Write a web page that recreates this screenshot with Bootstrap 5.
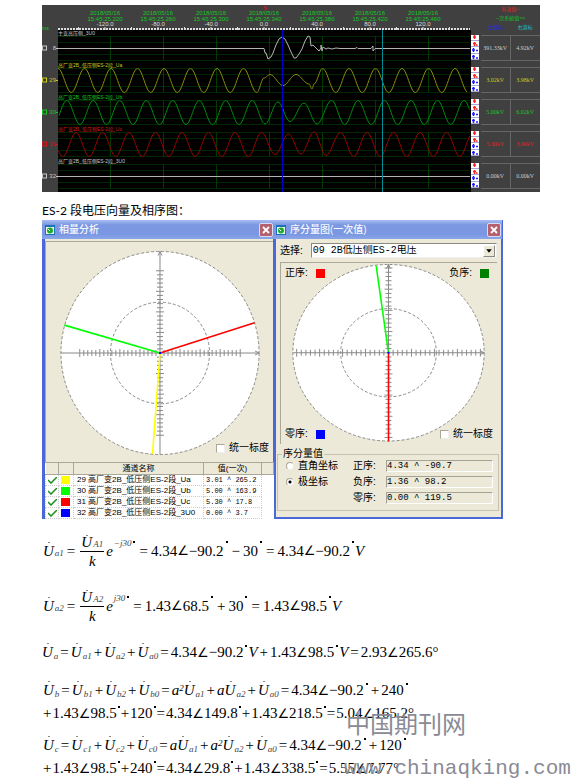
<!DOCTYPE html>
<html lang="zh-CN">
<head>
<meta charset="utf-8">
<meta name="viewport" content="width=device-width, initial-scale=1">
<title>ES-2 段电压向量及相序图</title>
<link href="https://cdn.jsdelivr.net/npm/bootstrap@5.3.0/dist/css/bootstrap.min.css" rel="stylesheet">
<style>
  body { background: #fff; color: #000; font-family: "Liberation Sans", "Noto Sans CJK SC", sans-serif; }
  .sheet { padding: 5px 34px 0 42px; }
  svg { display: block; }

  /* waveform recorder */
  .recorder { display: grid; grid-template-columns: 1fr 69px; background: #404040; overflow: hidden; }
  .recorder text { font-size: 6px; }
  .recorder .chan { font-size: 5px; }
  .readout { display: grid; grid-template-columns: 8px 59px; column-gap: 2px; grid-template-rows: 27px repeat(5, 32px); }
  .zoomers { background: #fff; margin: 3px 0 4px; display: grid; grid-template-rows: repeat(4, 1fr); row-gap: 1px; }
  .zoomers button { border: 0; padding: 0 1px; background: #fff; line-height: 0; color: #f22; border-bottom: 1px solid #aac; overflow: hidden; }
  .zoomers button:nth-child(n+3) { color: #22f; }
  .pair { display: grid; grid-template-columns: 1fr 1fr; margin: 3px 0; border: solid #666; border-width: 1px 0; font: 6px/24px "Liberation Serif", serif; text-align: center; color: #ccc; }
  .pair > :first-child { border-right: 1px solid #666; }
  .head { font-size: 5px; line-height: 9px; text-align: center; }
  .tone-y { color: #c8c820; } .tone-g { color: #12c822; } .tone-r { color: #e02020; }
  .tone-b { color: #2020ff; } .tone-c { color: #10c8c8; }

  .caption { font: 12px/18px "Lato", "Noto Sans CJK SC", sans-serif; margin: 10px 0 0; }

  /* dialogs */
  .dialogs { display: grid; grid-template-columns: 232fr 229fr; max-width: 461px; font-size: 10px; line-height: 12px; align-items: start; }
  .dlg { background: #ece9d8; border: solid #4a68d8; border-width: 0 1px 0 3px; min-width: 0; }
  .dlg-seq { border-width: 0 2px 2px; }
  .dlg-title { height: 19px; margin: 0 -1px 0 -3px; padding: 0 1px 0 3px; background: linear-gradient(#a9bdf2, #7c98e2 25%, #7b97e1 75%, #89a6ea); color: #f4f7ff; gap: 4px; }
  .dlg-title h2 { font-size: 10px; line-height: 19px; margin: 0; font-weight: 500; flex: 1; }
  .dlg-title button { width: 14px; height: 14px; padding: 0; border: 1px solid #d8dcf4; border-radius: 2px; background: #b5606c; line-height: 0; }
  .stack { display: grid; border: solid #aca899; border-width: 1px 0 0 1px; }
  .stack > * { grid-area: 1 / 1; }
  .stack > .plot { width: 100%; height: auto; }
  .slim { margin-top: 2px; }
  .source { margin: 4px 4px 0; }
  .corner-tl { place-self: start; } .corner-tr { place-self: start end; }
  .corner-bl { place-self: end start; } .corner-br { place-self: end; }
  .swatch { width: 9px; height: 9px; }
  .chan-list .swatch { height: 8px; }
  .bg-y { background: #ff0; } .bg-g { background: #0f0; } .bg-r { background: #f00; } .bg-b { background: #00f; } .bg-dg { background: #008000; }
  input[type=checkbox], input[type=radio] { appearance: none; margin: 0; width: 9px; height: 9px; background: #fff; border: 1px solid #aaa698; border-right-color: #eee; border-bottom-color: #eee; }
  input[type=radio] { border-radius: 50%; width: 8px; height: 8px; }
  input[type=radio]:checked { background: radial-gradient(#000 0 1px, #fff 2px); }
  .chan-list { width: 100%; table-layout: fixed; border-collapse: collapse; background: #fff; font-size: 8px; line-height: 10px; }
  .chan-list th { height: 12px; padding: 0; font-weight: 400; text-align: center; background: #ece9d8; border: 1px solid #aca899; border-left-color: #fff; }
  .chan-list td { height: 11px; padding: 0 3px; border: 1px dotted #ccc; border-top: 0; white-space: nowrap; }
  .chan-list .tight { padding: 0 2px; }
  .chan-list .val { font: 7px/10px "Liberation Mono", monospace; padding: 0 2px; }
  .chan-list td:last-child { border-color: transparent; }
  .picker { font: 10px/12px "Liberation Mono", "Noto Sans CJK SC", monospace; height: 15px; border: 1px solid #8c8a80; border-right-color: #eee; border-bottom-color: #eee; padding: 0 0 0 1px; background: #fff; appearance: none; border-radius: 0; color: #000; width: 100%; }
  .drop { width: 12px; height: 12px; background: #ece9d8; border: 1px solid #fff; border-right-color: #8c8a80; border-bottom-color: #8c8a80; justify-self: end; margin: 2px 2px 0 0; pointer-events: none; }
  .group { border: 1px solid #c5c2b2; margin: 4px 2px 6px 1px; padding: 0 5px 6px 8px; }
  .group legend { float: none; width: auto; font-size: 10px; line-height: 12px; margin: 0 0 0 -4px; padding: 0 1px; }
  .fields { display: grid; grid-template-columns: 67px 33px 1fr; row-gap: 4px; align-items: center; }
  .fields input[type=text] { width: 100%; min-width: 0; height: 12px; padding: 0; font: 9px/10px "Liberation Mono", monospace; background: #ece9d8; border: 1px solid #a5a294; border-right-color: #fff; border-bottom-color: #fff; }

  /* equations */
  .eq { display: flex; align-items: baseline; white-space: nowrap; font: 15px/20px "Liberation Serif", "DejaVu Sans", serif; height: 22px; margin-left: 1px; }
  .eq sub, .eq sup { font-size: 9px; line-height: 1; }
  .eq sub { bottom: -2px; color: #444; padding-left: 1px; }
  .eq .flush sub { bottom: 0; }
  .eq .ph { position: relative; }
  .eq .ph::before { content: ""; position: absolute; left: 5px; top: 1px; width: 2px; height: 1px; background: #888; }
  .op { padding: 0 2px; }
  .ang { font-size: 13px; font-family: "DejaVu Sans", sans-serif; }
  .deg { width: 2px; height: 2px; background: #000; margin: 3px 1px 0 2px; align-self: flex-start; }
  .frac { display: inline-flex; flex-direction: column; align-items: center; line-height: 18px; margin: 0 2px; }
  .frac > :first-child { border-bottom: 1px solid #000; padding: 0 1px; }
  .tall { height: 46px; align-items: center; }
  .tall .op { padding: 0 3px; }
  .tall .deg { margin-top: 13px; }
  .tall .pow { font-size: 9px; align-self: flex-start; line-height: 12px; margin-top: 9px; color: #444; padding-left: 1px; }
  .cont .op { padding: 0 1px; }
  .cont .deg { margin: 3px 0 0 1px; }
  .equations { display: grid; padding-top: 9px; }
  .equations .tall { margin-bottom: 9px; }
  .equations .wide { margin: 4px 0 16px; }
  .equations .cont { margin: 1px 0 10px; }
  .equations .eq:last-child { height: 20px; margin-bottom: 0; }

  .watermark { position: absolute; left: 344px; top: 707px; color: #8a8a94; pointer-events: none; white-space: nowrap; }
  .watermark div { font: 400 24px/32px "Noto Sans CJK SC", sans-serif; padding-left: 2px; }
  .watermark p { font: 21px/24px "Liberation Mono", monospace; margin: 18px 0 0; }
</style>
<script src="https://cdn.jsdelivr.net/npm/bootstrap@5.3.0/dist/js/bootstrap.bundle.min.js"></script>
</head>
<body>
<main class="sheet">
  <section class="recorder" aria-label="录波波形">
    <svg id="scope" viewBox="42 5 429 187" width="100%" height="187" preserveAspectRatio="none"></svg>
    <div class="readout" id="readout">
      <span></span>
      <div class="head">
        <div class="tone-r">有效值--</div>
        <div class="tone-g">--次系统值&gt;&gt;</div>
        <div class="d-flex justify-content-around"><span class="tone-b">左游标</span><span class="tone-c">右游标</span></div>
      </div>
    </div>
  </section>

  <p class="caption">ES-2 段电压向量及相序图：</p>

  <div class="dialogs">
    <section class="dlg">
      <header class="dlg-title d-flex align-items-center">
        <svg width="10" height="10" viewBox="0 0 10 10"><path d="M0 0h10v10H0z" fill="#1d72b8"/><path d="M1 2h8v7H1z" fill="#e8f8e8"/><circle cx="5" cy="5.500" r="3" fill="#1faa30"/><path d="M3 4l2 2" stroke="#fff"/></svg>
        <h2>相量分析</h2>
        <button type="button" aria-label="关闭"><svg width="12" height="12" viewBox="0 0 12 12"><path d="M3 3l6 6M9 3l-6 6" stroke="#fff" stroke-width="1.800"/></svg></button>
      </header>
      <div class="stack slim">
        <svg id="phasor" class="plot" viewBox="45 242 228 221"></svg>
        <label class="corner-br d-flex align-items-center gap-1 pe-1 mb-2"><input type="checkbox">统一标度</label>
      </div>
      <table class="chan-list">
        <colgroup><col width="13"><col width="15"><col width="130"><col width="58"><col width="12"></colgroup>
        <thead><tr><th></th><th></th><th>通道名称</th><th>值(一次)</th><th></th></tr></thead>
        <tbody id="channels"></tbody>
      </table>
    </section>

    <section class="dlg dlg-seq">
      <header class="dlg-title d-flex align-items-center">
        <svg width="10" height="10" viewBox="0 0 10 10"><path d="M0 0h10v10H0z" fill="#1d72b8"/><path d="M1 2h8v7H1z" fill="#e8f8e8"/><circle cx="5" cy="5.500" r="3" fill="#1faa30"/><path d="M3 4l2 2" stroke="#fff"/></svg>
        <h2>序分量图(一次值)</h2>
        <button type="button" aria-label="关闭"><svg width="12" height="12" viewBox="0 0 12 12"><path d="M3 3l6 6M9 3l-6 6" stroke="#fff" stroke-width="1.800"/></svg></button>
      </header>
      <div class="source d-flex align-items-center">
        <label for="src" class="text-nowrap pe-2">选择:</label>
        <div class="stack border-0 flex-grow-1">
          <select id="src" class="picker"><option>09 2B低压侧ES-2电压</option></select>
          <svg class="drop" viewBox="0 0 9 9"><path d="M2 3h5L4.500 6z"/></svg>
        </div>
      </div>
      <div class="stack mt-1 mx-1">
        <svg id="sequence" class="plot" viewBox="280 263 219 184"></svg>
        <div class="corner-tl d-flex align-items-center ps-1 mt-1 gap-2"><span>正序:</span><i class="swatch bg-r"></i></div>
        <div class="corner-tr d-flex align-items-center pe-2 mt-1 gap-2"><span>负序:</span><i class="swatch bg-dg"></i></div>
        <div class="corner-bl d-flex align-items-center ps-1 mb-1 gap-2"><span>零序:</span><i class="swatch bg-b"></i></div>
        <label class="corner-br d-flex align-items-center gap-1 pe-1 mb-1"><input type="checkbox">统一标度</label>
      </div>
      <fieldset class="group">
        <legend>序分量值</legend>
        <div class="fields">
          <label class="d-flex align-items-center gap-1"><input type="radio" name="coord">直角坐标</label>
          <label for="pos">正序:</label><input id="pos" type="text" value="4.34 ^ -90.7" readonly>
          <label class="d-flex align-items-center gap-1"><input type="radio" name="coord" checked>极坐标</label>
          <label for="neg">负序:</label><input id="neg" type="text" value="1.36 ^ 98.2" readonly>
          <span></span>
          <label for="zero">零序:</label><input id="zero" type="text" value="0.00 ^ 119.5" readonly>
        </div>
      </fieldset>
    </section>
  </div>

  <section id="equations" class="equations"></section>
  <div class="watermark"><div>中国期刊网</div><p>www.chinaqking.com</p></div>
</main>

<script>
const line = (x1, y1, x2, y2, c, w = 1, extra = '') =>
  `<path d="M${x1} ${y1}L${x2} ${y2}" stroke="${c}" stroke-width="${w}" ${extra}/>`;
const trace = (pts, c) => `<polyline points="${pts.map(p => p.join(',')).join(' ')}" fill="none" stroke="${c}"/>`;

/* Joins alternating peaks and troughs with half-cosine arcs. */
function wave(knots) {
  const out = [];
  for (let i = 0; i < knots.length - 1; i++) {
    const [x0, y0] = knots[i], [x1, y1] = knots[i + 1];
    for (let k = 0; k < 12; k++) {
      const t = k / 12;
      out.push([x0 + (x1 - x0) * t, y0 + (y1 - y0) * (1 - Math.cos(Math.PI * t)) / 2]);
    }
  }
  return out.filter(p => p[0] >= 58 && p[0] <= 470);
}
/* Regular swings from a first extreme, dir -1 for a peak. */
function swings(x, end, mid, dir) {
  const out = [];
  for (; x <= end; x += 13.25, dir = -dir) out.push([x, mid + 12 * dir]);
  return out;
}

const name = '高厂变2B_低压侧ES-2段_';
const rows = [
  { no: '8', label: '主变高压侧_3U0', c: '#c8c8c8', l: '391.33kV', r: '4.92kV', tone: '' },
  { no: '29', label: name + 'Ua', c: '#c8c820', l: '3.02kV', r: '3.98kV', tone: 'tone-y' },
  { no: '30', label: name + 'Ub', c: '#12c822', l: '5.00kV', r: '6.02kV', tone: 'tone-g' },
  { no: '31', label: name + 'Uc', c: '#d01818', l: '5.30kV', r: '3.99kV', tone: 'tone-r' },
  { no: '32', label: name + '3U0', c: '#c8c8c8', l: '0.00kV', r: '0.00kV', tone: '' }
];
let s = '<path d="M58 30H471V192H58z" fill="#000"/>';
for (let i = 0; i < 5; i++)
  for (const d of [-12, -6, 6, 12]) s += line(58, 48.5 + 32 * i + d, 470, 48.5 + 32 * i + d, '#002800');
for (let i = 0; i < 7; i++) {
  const g = 110.5 + 53 * i, x = 105 + 53 * i;
  for (let k = 0; k < 5; k++) s += line(g, 36 + 32 * k, g, 61 + 32 * k, '#003c00');
  const sec = 220 + 40 * i;
  s += `<g text-anchor="middle"><text x="${x}" y="15" fill="#12c822">2018/05/16</text>
    <text x="${x}" y="21" fill="#12c822">15:45:25.${sec}</text>
    <text x="${x}" y="26" fill="#ddd">${(-120 + 40 * i).toFixed(1)}</text></g>`;
}
s += line(58, 29, 470, 29, '#ddd', 2, 'stroke-dasharray="2 1"');
for (let x = 78.5; x < 470; x += 26.5) s += line(x, 27, x, 30, '#ddd');
s += '<text x="263" y="10" fill="#e01010">S</text><text x="42" y="30" class="chan" fill="#12c822">ms</text>';
rows.forEach((r, i) => {
  const y = 48 + 32 * i;
  s += `<text class="chan" x="58" y="${y - 13}" fill="${r.c}">${r.label}</text>
    <rect x="42.500" y="${y - 2}" width="4" height="4" fill="none" stroke="${r.c}"/>
    <text x="56" y="${y + 2}" text-anchor="end" fill="${r.c}">${r.no}</text>` + line(56, y + .5, 58, y + .5, r.c);
});
s += trace([[58,48.5],[264,48.5],[265,53],[266,53],[268,59],[271,57],[273,53],[276,45],[279,39],[282,37],[285,39],[288,45],[291,52],[294,58],[296,58],[299,54],[302,49],[305,41],[308,36],[310,37],[311,46],[313,45],[315,47],[317,49],[319,51],[321,48],[321,45],[322,51],[323,47],[326,49],[328,48],[332,49],[336,48],[340,48.5],[355,48.5],[357,47.5],[358,48.5],[371,48.5],[373,46],[373,51],[375,48.5],[470,48.5]], '#b4b4b4');
s += trace(wave([...swings(58, 258, 80.5, -1), [264,78], [270,74.5], [283,85.5], [296,74.5], [309,84], [312,89], [314,84], ...swings(322.5, 480, 80.5, -1)]), '#8c8c0c');
s += trace(wave([...swings(53.5, 258, 112.5, 1), [265,124], [278,102], [290,121.5], [304,103], [317,124], ...swings(331.5, 485, 112.5, -1)]), '#008c10');
s += trace(wave([...swings(49.5, 262, 144.5, -1), [275,154.5], [288.5,134], [301,154], [314,132], [326,155.5], ...swings(340.5, 485, 144.5, -1)]), '#980404');
s += line(58, 176.5, 470, 176.5, '#b4b4b4') + line(282.5, 30, 282.5, 192, '#0000d0') + line(382.5, 30, 382.5, 192, '#008c94');
scope.innerHTML = s;

const marks = ['M1 2h3M2.500 0v4', 'M1 1.500h3M2.500 0v4M4 3h1.500', 'M0 2h3M1.500 0v4M4 2.500h2', 'M0 1.500h3M1.500 0v4M4 3h2'];
const hints = ['放大幅值', '缩小幅值', '放大时间', '缩小时间'];
readout.innerHTML += rows.map(r => `<div class="zoomers">${marks.map((m, i) =>
  `<button type="button" aria-label="${hints[i]}"><svg width="6" height="4" viewBox="0 0 6 4"><path d="${m}" stroke="currentColor" stroke-width="1.500"/></svg></button>`).join('')}</div>
  <div class="pair ${r.tone}"><span>${r.l}</span><span>${r.r}</span></div>`).join('');

/* Polar dial: two dashed rings, ticked axes and the vectors. */
function dial(el, cx, cy, rx, ry, reach, vectors) {
  const g = '#888';
  let d = `<ellipse cx="${cx}" cy="${cy}" rx="${rx}" ry="${ry}" fill="#fff" stroke="${g}" stroke-dasharray="3 2"/>
    <ellipse cx="${cx}" cy="${cy}" rx="${rx / 2}" ry="${ry / 2}" fill="none" stroke="${g}" stroke-dasharray="3 2"/>`;
  d += line(cx - rx, cy, cx + rx, cy, g) + line(cx, cy - ry, cx, cy + ry, g);
  d += `<path d="M${cx - 2} ${cy - ry + 4}l2 -4l2 4M${cx + rx - 4} ${cy - 2}l4 2l-4 2" fill="none" stroke="${g}"/>`;
  for (let k = 1; k <= 20; k++) {
    const h = k % 5 ? 3 : 4, a = rx * reach * k / 20, b = ry * reach * k / 20;
    for (const q of [-1, 1]) d += line(cx + q * a, cy - h, cx + q * a, cy + h, g) + line(cx - h, cy + q * b, cx + h, cy + q * b, g);
  }
  vectors.forEach(v => d += line(cx, cy, v[0], v[1], v[2], 1.6));
  d += `<path d="M${cx - 1} ${cy - 1}h2v2h-2z" fill="#00f"/>`;
  el.innerHTML = d;
}
dial(phasor, 159.5, 353.5, 99.5, 102, .81, [[254.5, 323, '#f00'], [63.5, 325.5, '#0f0'], [152, 455, '#ff0']]);
dial(sequence, 389, 354, 97, 89.5, .96, [[389, 444, '#f00'], [376.5, 266, '#0f0']]);

channels.innerHTML = [['29', 'Ua', '3.01 ^ 265.2', 'y'], ['30', 'Ub', '5.00 ^ 163.9', 'g'], ['31', 'Uc', '5.30 ^ 17.8', 'r'], ['32', '3U0', '0.00 ^ 3.7', 'b']]
  .map(c => `<tr><td class="tight"><svg width="9" height="7" viewBox="0 0 9 7"><path d="M0 3l3 3L9 0" fill="none" stroke="#1c8c1c" stroke-width="1.500"/></svg></td>
    <td class="tight"><div class="swatch bg-${c[3]}"></div></td><td>${c[0]} ${name}${c[1]}</td><td class="val">${c[2]}</td><td></td></tr>`).join('');

/* Equation shorthand: U:x phasor, F:x fraction over k, P:x power of e, < angle sign, * degree dot, ~ spaced minus. */
const ph = (s, cls = '') => `<i class="ph ${cls}">U<sub>${s}</sub></i>`;
const eq = (src, cls = '') => `<div class="eq ${cls}">` + src.split(' ').map(t => {
  if (t.startsWith('U:')) return ph(t.slice(2), cls === 'tall' ? 'flush' : '');
  if (t.startsWith('F:')) return `<span class="frac"><span>${ph(t.slice(2), 'flush')}</span><i>k</i></span>`;
  if (t.startsWith('P:')) return `<i>e</i><i class="pow">${t.slice(2)}</i>`;
  if (t === 'a2') return '<i>a<sup>2</sup></i>';
  if (t === 'a' || t === 'V') return `<i>${t}</i>`;
  if (t === '<') return '<span class="ang">∠</span>';
  if (t === '*') return '<b class="deg"></b>';
  if (t === '=' || t === '+') return `<span class="op">${t}</span>`;
  if (t === '~') return '<span class="op">−</span>';
  if (t === '-') return '<span>−</span>';
  return `<span>${t}</span>`;
}).join('') + '</div>';
equations.innerHTML =
  eq('U:a1 = F:A1 P:−j30 * = 4.34 < - 90.2 * ~ 30 * = 4.34 < - 90.2 * V', 'tall') +
  eq('U:a2 = F:A2 P:j30 * = 1.43 < 68.5 * + 30 * = 1.43 < 98.5 * V', 'tall') +
  eq('U:a = U:a1 + U:a2 + U:a0 = 4.34 < - 90.2 * V + 1.43 < 98.5 * V = 2.93 < 265.6°', 'wide') +
  eq('U:b = U:b1 + U:b2 + U:b0 = a2 U:a1 + a U:a2 + U:a0 = 4.34 < - 90.2 * + 240 *') +
  eq('+ 1.43 < 98.5 * + 120 * = 4.34 < 149.8 * + 1.43 < 218.5 * = 5.04 < 165.2°', 'cont') +
  eq('U:c = U:c1 + U:c2 + U:c0 = a U:a1 + a2 U:a2 + U:a0 = 4.34 < - 90.2 * + 120 *') +
  eq('+ 1.43 < 98.5 * + 240 * = 4.34 < 29.8 * + 1.43 < 338.5 * = 5.55 < 7.77°', 'cont');
</script>
</body>
</html>
